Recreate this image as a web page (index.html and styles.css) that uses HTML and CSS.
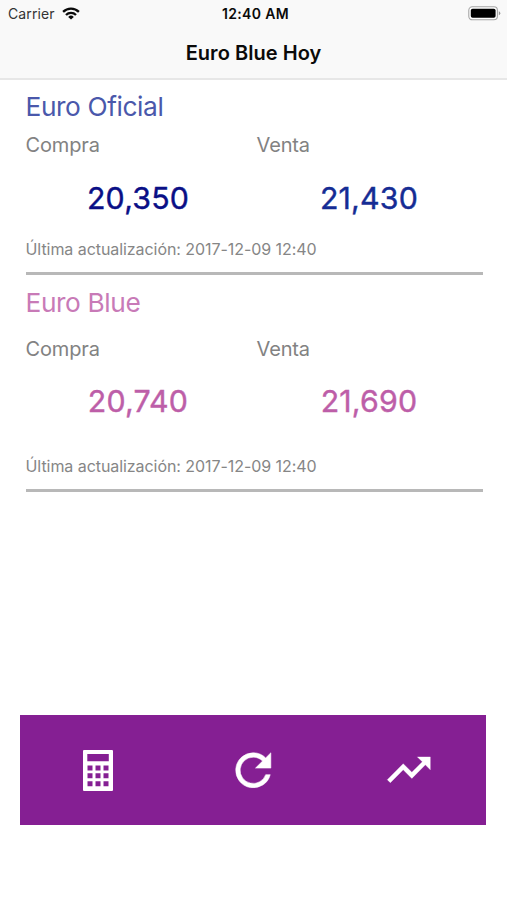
FILE: index.html
```html
<!DOCTYPE html>
<html lang="es">
<head>
<meta charset="utf-8">
<title>Euro Blue Hoy</title>
<link rel="stylesheet" href="styles.css">
</head>
<body>
<header class="header">
  <div class="status">
    <div class="status-left">
      <span class="carrier">Carrier</span>
      <svg class="wifi" viewBox="0 0 18 13" width="18" height="13" fill="none" stroke="#0a0a0a" stroke-width="2.3">
        <path d="M1.1 4.9a11.2 11.2 0 0 1 15.8 0"/>
        <path d="M4 8a7 7 0 0 1 10 0"/>
        <path d="M9 12.6 6.2 9.9a4 4 0 0 1 5.6 0z" fill="#0a0a0a" stroke="none"/>
      </svg>
    </div>
    <span class="clock">12:40 AM</span>
    <svg class="battery" viewBox="0 0 33 15" width="33" height="15">
      <rect x=".8" y=".8" width="28.6" height="13" rx="3.5" fill="#fff" stroke="#a5a5a5" stroke-width="1.1"/>
      <rect x="2.8" y="2.8" width="24.8" height="9" rx="1.8" fill="#000"/>
      <path d="M30.8 5.3q1.5.6 1.5 2t-1.5 2z" fill="#999"/>
    </svg>
  </div>
  <h1 class="title">Euro Blue Hoy</h1>
</header>
<main class="rates">
  <section class="rate official">
    <h2 class="name">Euro Oficial</h2>
    <div class="quotes">
      <div class="quote"><span class="label">Compra</span><span class="value buy">20,350</span></div>
      <div class="quote"><span class="label venta">Venta</span><span class="value sell">21,430</span></div>
    </div>
    <p class="updated">Última actualización: 2017-12-09 12:40</p>
  </section>
  <section class="rate blue">
    <h2 class="name">Euro Blue</h2>
    <div class="quotes">
      <div class="quote"><span class="label">Compra</span><span class="value buy">20,740</span></div>
      <div class="quote"><span class="label venta">Venta</span><span class="value sell">21,690</span></div>
    </div>
    <p class="updated">Última actualización: 2017-12-09 12:40</p>
  </section>
</main>
<nav class="toolbar">
  <button class="tool" aria-label="Calculadora">
    <svg width="30" height="41" viewBox="0 0 30 41" fill="#fff"><path fill-rule="evenodd" d="M1 0h28q1 0 1 1v39q0 1-1 1H1q-1 0-1-1V1q0-1 1-1zM4.3 4v7.3h21.5V4zM4.5 15.5v5h5v-5zM12.5 15.5v5h5v-5zM20.5 15.5v5h5v-5zM4.5 23.3v5h5v-5zM12.5 23.3v5h5v-5zM20.5 23.3v5h5v-5zM4.5 31.2v5h5v-5zM12.5 31.2v5h5v-5zM20.5 31.2v5h5v-5z"/></svg>
  </button>
  <button class="tool" aria-label="Actualizar">
    <svg width="52.6" height="52.6" viewBox="0 0 24 24" fill="#fff"><path d="M17.65 6.35A7.96 7.96 0 0 0 12 4a8 8 0 1 0 7.73 10h-2.08A6 6 0 1 1 12 6c1.66 0 3.14.69 4.22 1.78L13 11h7V4z" stroke="#fff" stroke-width=".25"/></svg>
  </button>
  <button class="tool" aria-label="Tendencia">
    <svg width="51.6" height="51.6" viewBox="0 0 24 24" fill="#fff"><path d="M16 6l2.29 2.29-4.88 4.88-4-4L2 16.59 3.41 18l6-6 4 4 6.3-6.29L22 12V6z" stroke="#fff" stroke-width=".15"/></svg>
  </button>
</nav>
</body>
</html>
```
FILE: styles.css
```css
* { box-sizing: border-box; margin: 0; padding: 0; }
body {
  width: 507px;
  height: 900px;
  overflow: hidden;
  background: #fff;
  font-family: Inter, "Liberation Sans", sans-serif;
  display: flex;
  flex-direction: column;
}
.header {
  height: 80px;
  background: #f9f9f9;
  border-bottom: 2px solid #e7e7e7;
  color: #0a0a0a;
}
.status {
  height: 27px;
  padding: 0 6px 0 8px;
  display: grid;
  grid-template-columns: 1fr auto 1fr;
  align-items: center;
}
.status-left { display: flex; align-items: center; gap: 7px; }
.carrier { font-size: 14px; letter-spacing: .1px; color: #333; }
.clock { font-size: 14px; font-weight: 600; letter-spacing: .35px; padding-left: 2px; }
.battery { justify-self: end; }
.title {
  font-size: 20px;
  font-weight: 600;
  line-height: 52px;
  text-align: center;
  letter-spacing: .05px;
}
.rates { padding: 0 24.5px 0 25.5px; }
.rate { border-bottom: 3px solid #b8b8b8; }
.official { height: 195px; padding-top: 11px; }
.blue { height: 217px; padding-top: 12px; }
.name { font-size: 26.3px; font-weight: 400; line-height: 32px; letter-spacing: -.4px; }
.official .name { color: #4a58ab; }
.blue .name { color: #c87ab7; }
.quotes { display: grid; grid-template-columns: 231px 1fr; }
.official .quotes { margin-top: 9px; }
.blue .quotes { margin-top: 17px; }
.quote { display: flex; flex-direction: column; }
.label { font-size: 20px; line-height: 26px; letter-spacing: -.15px; color: #828282; }
.value {
  width: 225px;
  margin-top: 19px;
  font-size: 30.3px;
  line-height: 40px;
  letter-spacing: .2px;
  text-align: center;
  font-weight: 400;
  -webkit-text-stroke: .4px currentColor;
}
.official .quote .value { margin-top: 20px; }
.official .buy { color: #0a0f86; }
.official .sell { color: #152c94; }
.blue .value { color: #bd5ea8; }
.updated { font-size: 16px; line-height: 20px; letter-spacing: -.06px; color: #868686; }
.official .updated { margin-top: 21px; }
.blue .updated { margin-top: 35px; }
.toolbar {
  width: 466px;
  height: 110px;
  margin: auto auto 75px 20.4px;
  background: #851f93;
  display: grid;
  grid-template-columns: repeat(3, 1fr);
}
.tool {
  display: flex;
  align-items: center;
  justify-content: center;
  border: 0;
  background: none;
}
```
